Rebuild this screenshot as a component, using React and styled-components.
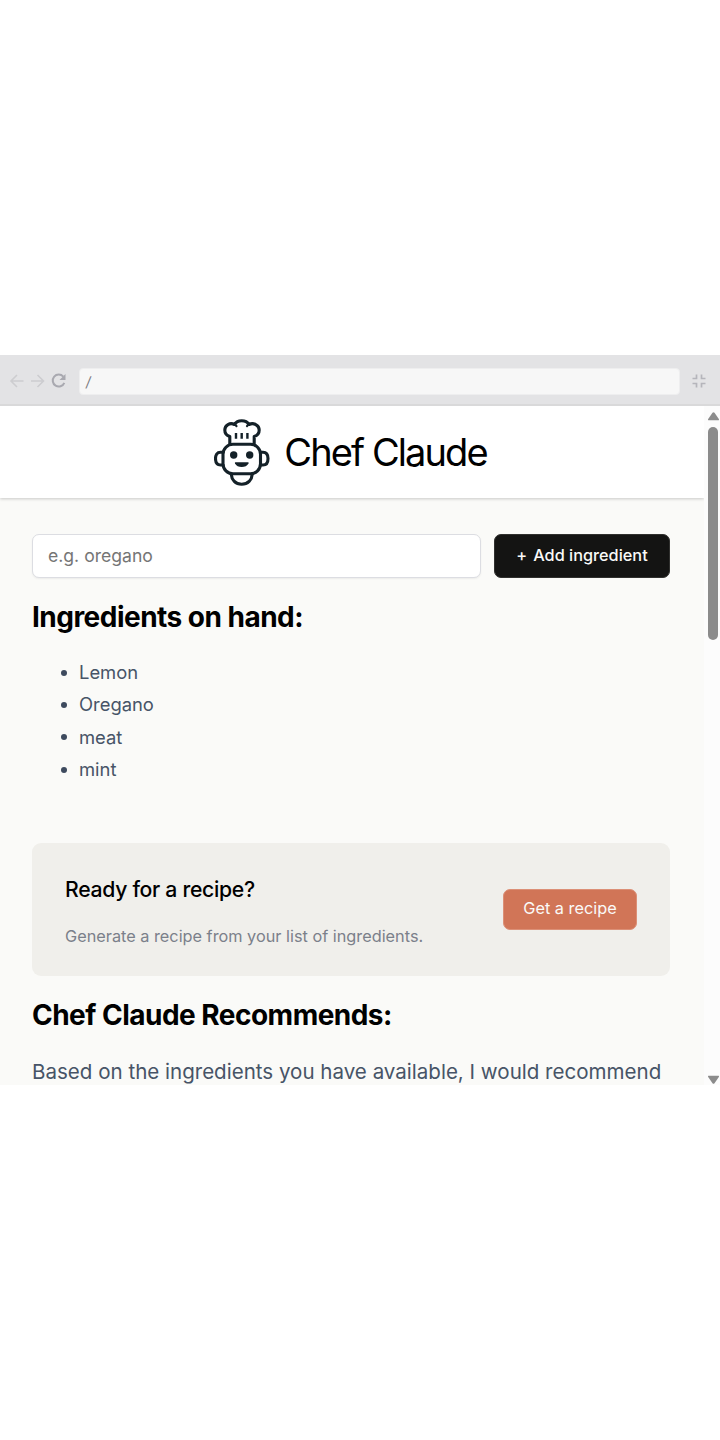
import React from "react";
import styled, { createGlobalStyle } from "styled-components";

const GlobalStyle = createGlobalStyle`
  * { box-sizing: border-box; }
  body { margin: 0; background: #fff; }
  body, button, input { font-family: Inter, "Liberation Sans", sans-serif; }
`;

const Page = styled.div`
  height: 1440px;
  padding: 355px 0;
  background: #fff;
`;

const BrowserFrame = styled.div`
  display: flex;
  flex-direction: column;
  height: 730px;
  overflow: hidden;
`;

const Toolbar = styled.div`
  display: flex;
  align-items: center;
  flex: none;
  height: 51px;
  padding: 3px 14px 0 9px;
  background: #e3e3e5;
  border-bottom: 2px solid #d9d9da;
`;

const ToolIcon = styled.svg`
  flex: none;
  display: block;
  fill: none;
  stroke: ${(p) => p.$color};
  stroke-width: ${(p) => p.$weight || 1.6};
  margin-right: ${(p) => p.$gap || 0}px;
`;

const Address = styled.div`
  flex: 1;
  height: 27px;
  margin-right: 12px;
  padding-left: 6px;
  border: 1px solid #eeeeef;
  border-radius: 4px;
  background: #f7f7f7;
  color: #7b7b80;
  font-size: 14px;
  line-height: 26px;
`;

const Slash = styled.span`
  display: inline-block;
  transform: skewX(-8deg);
`;

const Viewport = styled.div`
  display: flex;
  flex: 1;
  min-height: 0;
`;

const Content = styled.div`
  flex: 1;
  overflow: hidden;
  background: #fafaf8;
`;

const Header = styled.header`
  display: flex;
  align-items: center;
  justify-content: center;
  gap: 14px;
  height: 92px;
  padding-right: 3px;
  background: #fff;
  box-shadow: 0 1px 3px rgba(0, 0, 0, 0.2);
`;

const Title = styled.h1`
  margin: 0;
  font-size: 38px;
  font-weight: 400;
  letter-spacing: -1.9px;
  line-height: 46px;
  color: #000;
`;

const Main = styled.main`
  padding: 36px 34px 0 32px;
`;

const Form = styled.form`
  display: flex;
  gap: 13px;
  height: 44px;
`;

const Input = styled.input`
  flex: 1;
  min-width: 0;
  padding: 0 15px 1px;
  border: 1px solid #dcdde2;
  border-radius: 7px;
  background: #fff;
  box-shadow: 0 1px 2px rgba(0, 0, 0, 0.06);
  font-size: 17.6px;
  &::placeholder { color: #757575; }
`;

const AddButton = styled.button`
  display: flex;
  align-items: center;
  justify-content: center;
  gap: 6px;
  width: 176px;
  padding: 0 0 2px;
  border: 1px solid #30302e;
  border-radius: 7px;
  background: #141413;
  color: #fafaf8;
  font-size: 16.3px;
  font-weight: 500;
`;

const SectionTitle = styled.h2`
  margin: ${(p) => p.$top}px 0 0;
  font-size: 28px;
  line-height: 34px;
  font-weight: 700;
  letter-spacing: -0.52px;
  color: #000;
`;

const Ingredients = styled.ul`
  margin: 22px 0 0;
  padding: 0 0 0 29px;
  list-style: none;
  color: #475467;
  font-size: 18.4px;
  line-height: 32.3px;
`;

const Ingredient = styled.li`
  display: flex;
  align-items: center;
  gap: 12px;
  &::before {
    content: "";
    width: 6px;
    height: 6px;
    margin-top: 1px;
    border-radius: 50%;
    background: #3d4a5e;
  }
`;

const Callout = styled.section`
  display: flex;
  align-items: center;
  justify-content: space-between;
  height: 133px;
  margin-top: 57.8px;
  padding: 0 33px;
  border-radius: 9px;
  background: #f0efeb;
`;

const CalloutTitle = styled.h3`
  margin: 4px 0 23px;
  font-size: 21.2px;
  line-height: 26px;
  font-weight: 500;
  letter-spacing: -0.3px;
  color: #000;
`;

const CalloutText = styled.p`
  margin: 0;
  font-size: 16.3px;
  line-height: 22px;
  color: #7b808a;
`;

const RecipeButton = styled.button`
  width: 134px;
  height: 41px;
  padding: 0 0 2px;
  border: 1px solid #dc9077;
  border-radius: 7px;
  background: #d17557;
  color: #fafaf8;
  font-size: 16.3px;
`;

const Paragraph = styled.p`
  margin: 24px 0 0;
  color: #475467;
  font-size: 20.56px;
  line-height: 32px;
  white-space: nowrap;
`;

const Scrollbar = styled.div`
  display: flex;
  flex-direction: column;
  align-items: center;
  width: 16px;
  padding: 5px 0 0 2px;
  background: #fcfcfc;
`;

const Thumb = styled.div`
  width: 10px;
  height: 213px;
  margin: 6px 0 auto;
  border-radius: 5px;
  background: #8b8b8b;
`;

const Arrow = ({ down }) => (
  <svg width="13" height="10" viewBox="0 0 13 10">
    <path
      d={down ? "M1.500.7h10q1 0 .3 1.200L7.500 8.300q-1 1-2 0L1.200 1.900Q.5.7 1.500.7Z" : "M1.500 9.300h10q1 0 .3-1.200L7.500 1.700q-1-1-2 0L1.200 8.100Q.5 9.300 1.500 9.300Z"}
      fill="#8b8b8b"
    />
  </svg>
);

const Logo = styled.svg`
  flex: none;
  display: block;
  margin-top: 2px;
`;

const ChefLogo = () => (
  <Logo width="56" height="68" viewBox="0 0 56 68" fill="none" stroke="#142128" strokeWidth="3.1" strokeLinejoin="round" strokeLinecap="round">
    <path d="M15.800 24.500V17.500C12.500 16.500 10.800 14.500 10.800 11C10.800 6 16 3.300 20.500 5.500C22 3 24.500 1.800 27.700 1.800S33.500 3 35 5.500C39.500 3.300 45.200 6 45.200 11C45.200 14.500 43.500 16.500 40.200 17.500V24.500" />
    <path d="M20.500 5.500q1.300.6 2 1.600M35 5.500q-1.300.6-2 1.600" strokeWidth="2.200" />
    <path d="M22 14v5.800M27.700 14v5.800M33.400 14v5.800" strokeWidth="2.400" strokeLinecap="butt" />
    <rect x="9" y="25.300" width="37.500" height="29.500" rx="10" />
    <path d="M9 33.200H6.500C3 33.200 1.500 36 1.500 39.500S3 46 6.500 46H9M46.500 33.200H49C52.500 33.200 54 36 54 39.500S52.500 46 49 46H46.500" />
    <path d="M17.200 55C17.700 61 21.500 65.200 27.700 65.200S37.800 61 38.300 55" />
    <circle cx="19.700" cy="36" r="3.700" fill="#142128" stroke="none" />
    <circle cx="35.700" cy="36" r="3.700" fill="#142128" stroke="none" />
    <path d="M21.500 43.200h12.500q1 0 .5 1.300C33.200 47 30.700 48 27.700 48S22.200 47 21 44.500Q20.500 43.200 21.500 43.200Z" fill="#142128" stroke="none" />
  </Logo>
);

const ingredients = ["Lemon", "Oregano", "meat", "mint"];

export default function App() {
  return (
    <>
      <GlobalStyle />
      <Page>
        <BrowserFrame>
          <Toolbar>
            <ToolIcon width="15" height="14" viewBox="0 0 15 14" $color="#cdcdd0" $gap={6}>
              <path d="M14.500 7H2M8 1L2 7l6 6" />
            </ToolIcon>
            <ToolIcon width="15" height="14" viewBox="0 0 15 14" $color="#cdcdd0" $gap={6}>
              <path d="M1 7h12.500M7.500 1l6 6-6 6" />
            </ToolIcon>
            <ToolIcon width="16" height="16" viewBox="0 0 16 16" $color="#a9a9b0" $weight={2} $gap={12}>
              <path d="M12.300 3.600A6 6 0 1 0 13.300 9.800" />
              <path d="M14.500 1v6H8.500Z" fill="#a9a9b0" stroke="none" />
            </ToolIcon>
            <Address><Slash>/</Slash></Address>
            <ToolIcon width="14" height="14" viewBox="0 0 14 14" $color="#b5b5bb" $weight={1.7}>
              <path d="M.5 4.500h4v-4M13.500 4.500h-4v-4M.5 9.500h4v4M13.500 9.500h-4v4" />
            </ToolIcon>
          </Toolbar>
          <Viewport>
            <Content>
              <Header>
                <ChefLogo />
                <Title>Chef Claude</Title>
              </Header>
              <Main>
                <Form onSubmit={(e) => e.preventDefault()}>
                  <Input placeholder="e.g. oregano" aria-label="Add ingredient" />
                  <AddButton><span>+</span><span>Add ingredient</span></AddButton>
                </Form>
                <SectionTitle $top={22}>Ingredients on hand:</SectionTitle>
                <Ingredients>
                  {ingredients.map((name) => (
                    <Ingredient key={name}>{name}</Ingredient>
                  ))}
                </Ingredients>
                <Callout>
                  <div>
                    <CalloutTitle>Ready for a recipe?</CalloutTitle>
                    <CalloutText>Generate a recipe from your list of ingredients.</CalloutText>
                  </div>
                  <RecipeButton>Get a recipe</RecipeButton>
                </Callout>
                <SectionTitle $top={22}>Chef Claude Recommends:</SectionTitle>
                <Paragraph>Based on the ingredients you have available, I would recommend</Paragraph>
              </Main>
            </Content>
            <Scrollbar>
              <Arrow />
              <Thumb />
              <Arrow down />
            </Scrollbar>
          </Viewport>
        </BrowserFrame>
      </Page>
    </>
  );
}
